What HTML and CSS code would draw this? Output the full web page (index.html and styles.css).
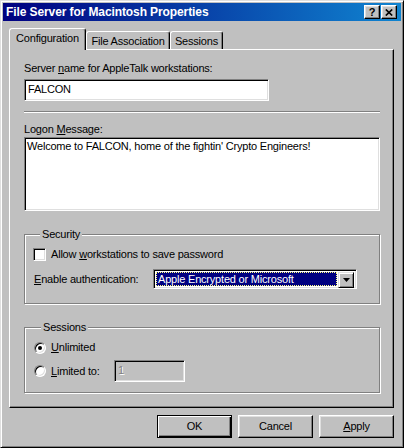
FILE: index.html
```html
<!DOCTYPE html>
<html>
<head>
<meta charset="utf-8">
<title>File Server for Macintosh Properties</title>
<link rel="stylesheet" href="styles.css">
</head>
<body>
<div class="window">
  <div class="titlebar">
    <span class="title">File Server for Macintosh Properties</span>
    <div class="tbtns">
      <span class="tbtn help">?</span>
      <span class="tbtn close"><svg width="8" height="7" viewBox="0 0 8 7"><path d="M0.8 0.5 L7.2 6.5 M7.2 0.5 L0.8 6.5" stroke="#000" stroke-width="1.7" fill="none"/></svg></span>
    </div>
  </div>
  <div class="tabs">
    <div class="tab active tab-config">Configuration</div>
    <div class="tab tab-assoc">File Association</div>
    <div class="tab tab-sess">Sessions</div>
  </div>
  <div class="panel">
    <div class="label">Server <u>n</u>ame for AppleTalk workstations:</div>
    <div class="field name">FALCON</div>
    <div class="sep"></div>
    <div class="label label-logon">Logon <u>M</u>essage:</div>
    <div class="field memo">Welcome to FALCON, home of the fightin' Crypto Engineers!</div>
    <fieldset class="group security">
      <legend>Security</legend>
      <div class="check-row"><span class="checkbox"></span><span class="check-label">Allow <u>w</u>orkstations to save password</span></div>
      <div class="select-row">
        <span class="sel-label"><u>E</u>nable authentication:</span>
        <div class="select">
          <span class="sel-value">Apple Encrypted or Microsoft</span>
          <span class="sel-btn"><svg width="7" height="4" viewBox="0 0 7 4"><path d="M0 0 H7 L3.5 4 Z" fill="#000"/></svg></span>
        </div>
      </div>
    </fieldset>
    <fieldset class="group sessions">
      <legend>Sessions</legend>
      <div class="radio-row first"><span class="radio on"></span><span class="radio-label"><u>U</u>nlimited</span></div>
      <div class="radio-row"><span class="radio"></span><span class="radio-label limited"><u>L</u>imited to:</span><div class="field num">1</div></div>
    </fieldset>
  </div>
  <div class="buttons">
    <div class="btn default">OK</div>
    <div class="btn">Cancel</div>
    <div class="btn"><u>A</u>pply</div>
  </div>
</div>
</body>
</html>
```
FILE: styles.css
```css
* { box-sizing: border-box; }
html, body { margin: 0; padding: 0; background: #c0c0c0; }
body {
  font-family: "Liberation Sans", Arial, sans-serif;
  font-size: 11px;
  line-height: 13px;
  letter-spacing: -0.2px;
  color: #000;
}
u { text-decoration: underline; text-underline-offset: 1px; }

.window {
  width: 404px;
  height: 448px;
  background: #c0c0c0;
  border: 1px solid;
  border-color: #dfdfdf #000 #000 #dfdfdf;
  box-shadow: inset 1px 1px #fff, inset -1px -1px #808080;
  padding: 2px;
  display: flex;
  flex-direction: column;
}

.titlebar {
  height: 18px;
  flex: none;
  background: linear-gradient(to right, #000080, #1084d0);
  display: flex;
  align-items: center;
  justify-content: space-between;
  padding: 0 4px 0 3px;
  color: #fff;
}
.title {
  font-weight: bold;
  font-size: 12px;
  line-height: 18px;
  letter-spacing: -0.1px;
}
.tbtns { display: flex; gap: 1px; }
.tbtn {
  width: 16px;
  height: 14px;
  background: #c0c0c0;
  border: 1px solid;
  border-color: #fff #000 #000 #fff;
  box-shadow: inset -1px -1px #808080, inset 1px 1px #dfdfdf;
  display: flex;
  align-items: center;
  justify-content: center;
  color: #000;
}
.help { font-weight: bold; font-size: 11px; line-height: 12px; letter-spacing: 0; }

.tabs {
  margin-top: 7px;
  padding-left: 6px;
  height: 21px;
  flex: none;
  display: flex;
  align-items: flex-end;
}
.tab {
  height: 18px;
  border: 1px solid;
  border-bottom: 0;
  border-color: #fff #000 #000 #fff;
  box-shadow: inset -1px 0 #808080;
  border-radius: 3px 3px 0 0;
  padding-top: 3px;
  text-align: center;
  background: #c0c0c0;
}
.tab.active {
  height: 22px;
  margin-bottom: -1px;
  position: relative;
  z-index: 1;
}
.tab-config { width: 77px; }
.tab-assoc { width: 84px; }
.tab-sess { width: 53px; }

.panel {
  margin-left: 6px;
  width: 385px;
  height: 359px;
  flex: none;
  border: 1px solid;
  border-color: #fff #000 #000 #fff;
  box-shadow: inset -1px -1px #808080;
  padding: 12px 13px 0 14px;
}

.label { height: 13px; white-space: nowrap; }
.label-logon { margin-top: 10px; }

.field {
  background: #fff;
  border: 1px solid;
  border-color: #808080 #fff #fff #808080;
  box-shadow: inset 1px 1px #000, inset -1px -1px #dfdfdf;
  white-space: nowrap;
}
.name {
  margin-top: 4px;
  width: 245px;
  height: 22px;
  padding: 3px 0 0 3px;
}
.sep {
  margin-top: 10px;
  height: 2px;
  border-top: 1px solid #808080;
  border-bottom: 1px solid #fff;
}
.memo {
  margin-top: 1px;
  height: 74px;
  padding: 2px 0 0 2px;
}

.group {
  margin: 17px 0 0 0;
  padding: 0;
  min-width: 0;
  border: 1px solid #808080;
  box-shadow: 1px 1px 0 #fff, inset 1px 1px 0 #fff;
}
.group legend {
  margin-left: 7px;
  padding: 0 2px;
  line-height: 13px;
  background: #c0c0c0;
}
.security { padding: 0 0 14px 8px; }
.check-row {
  margin-top: 7px;
  height: 13px;
  display: flex;
  align-items: center;
}
.checkbox {
  width: 13px;
  height: 13px;
  flex: none;
  background: #fff;
  border: 1px solid;
  border-color: #808080 #fff #fff #808080;
  box-shadow: inset 1px 1px #000, inset -1px -1px #dfdfdf;
}
.check-label { margin-left: 5px; white-space: nowrap; }

.select-row {
  margin-top: 8px;
  padding-left: 1px;
  display: flex;
  align-items: center;
}
.sel-label { width: 119px; white-space: nowrap; }
.select {
  width: 204px;
  height: 20px;
  background: #fff;
  border: 1px solid;
  border-color: #808080 #fff #fff #808080;
  box-shadow: inset 1px 1px #000, inset -1px -1px #dfdfdf;
  padding: 2px;
  display: flex;
}
.sel-value {
  flex: 1;
  margin: 0 1px 0 0;
  background: #000080;
  color: #fff;
  outline: 1px dotted #ffff80;
  outline-offset: -1px;
  padding: 1px 0 0 2px;
  white-space: nowrap;
  overflow: hidden;
}
.sel-btn {
  width: 16px;
  height: 16px;
  flex: none;
  background: #c0c0c0;
  border: 1px solid;
  border-color: #dfdfdf #000 #000 #dfdfdf;
  box-shadow: inset 1px 1px #fff, inset -1px -1px #808080;
  display: flex;
  align-items: center;
  justify-content: center;
}

.sessions { padding: 0 0 10px 9px; }
.radio-row {
  margin-top: 6px;
  height: 22px;
  display: flex;
  align-items: center;
}
.radio-row.first { margin-top: 7px; height: 13px; }
.radio {
  width: 12px;
  height: 12px;
  flex: none;
  border-radius: 50%;
  background: #fff;
  border: 1px solid;
  border-color: #808080 #fff #fff #808080;
  box-shadow: inset 1px 1px #000, inset -1px -1px #dfdfdf;
  display: flex;
  align-items: center;
  justify-content: center;
}
.radio.on::after {
  content: "";
  width: 4px;
  height: 4px;
  border-radius: 50%;
  background: #000;
}
.radio-label { margin-left: 5px; white-space: nowrap; }
.limited { width: 63px; }
.num {
  width: 71px;
  height: 22px;
  background: #c0c0c0;
  color: #808080;
  text-shadow: 1px 1px 0 #fff;
  padding: 3px 0 0 3px;
}

.buttons {
  margin-top: 7px;
  padding-right: 7px;
  display: flex;
  justify-content: flex-end;
  gap: 6px;
}
.btn {
  width: 75px;
  height: 23px;
  border: 1px solid;
  border-color: #fff #000 #000 #fff;
  box-shadow: inset -1px -1px #808080, inset 1px 1px #dfdfdf;
  display: flex;
  align-items: center;
  justify-content: center;
}
.btn.default {
  border-color: #000;
  box-shadow: inset 1px 1px #fff, inset -1px -1px #000, inset -2px -2px #808080;
}
```
